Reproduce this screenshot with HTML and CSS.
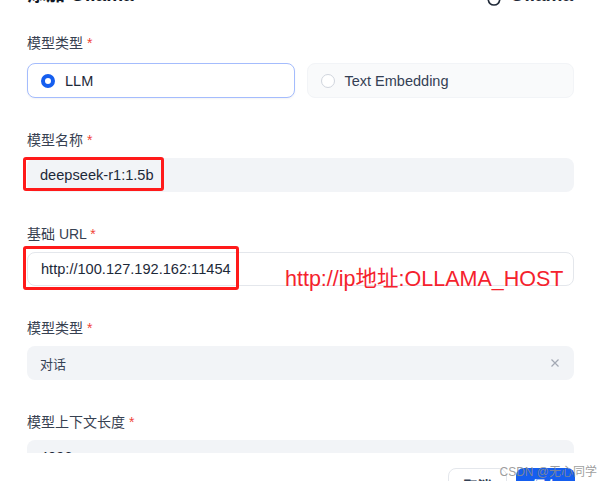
FILE: index.html
```html
<!DOCTYPE html>
<html>
<head>
  <title>添加 Ollama</title>
  <link rel="stylesheet" href="styles.css">
</head>
<body>
  <div class="modal">
    <div class="modal-body">
      <div class="modal-head">
        <div class="modal-title">添加 Ollama</div>
        <div class="provider">
          <svg class="provider-icon" width="16" height="20" viewBox="0 0 16 20">
            <path d="M3 2 L4 8 M12 2 L11 8 M2 10 Q2 18 8 18 Q14 18 14 10" fill="none" stroke="#1f2937" stroke-width="1.6"/>
          </svg>
          <span>Ollama</span>
        </div>
      </div>

      <div class="form">
        <div class="field">
          <div class="label label-cards">模型类型 <span class="req">*</span></div>
          <div class="cards">
            <div class="card card-active">
              <span class="radio radio-on"></span>
              <span>LLM</span>
            </div>
            <div class="card">
              <span class="radio"></span>
              <span>Text Embedding</span>
            </div>
          </div>
        </div>

        <div class="field">
          <div class="label">模型名称 <span class="req">*</span></div>
          <div class="input input-fill">
            deepseek-r1:1.5b
            <div class="mark mark-name"></div>
          </div>
        </div>

        <div class="field">
          <div class="label">基础 URL <span class="req">*</span></div>
          <div class="input input-line">
            http://100.127.192.162:11454
            <div class="mark mark-url"></div>
            <div class="note">http://ip地址:OLLAMA_HOST</div>
          </div>
        </div>

        <div class="field">
          <div class="label">模型类型 <span class="req">*</span></div>
          <div class="input input-fill input-select">
            <span class="select-value">对话</span>
            <svg class="clear" width="10" height="10" viewBox="0 0 10 10">
              <path d="M1.5 1.5 L8.5 8.5 M8.5 1.5 L1.5 8.5" stroke="#a3a8b3" stroke-width="1.2"/>
            </svg>
          </div>
        </div>

        <div class="field">
          <div class="label">模型上下文长度 <span class="req">*</span></div>
          <div class="input input-fill">4096</div>
        </div>
      </div>
    </div>

    <div class="modal-foot">
      <button class="btn btn-cancel">取消</button>
      <button class="btn btn-save">保存</button>
      <div class="watermark">CSDN @无心同学</div>
    </div>
  </div>
</body>
</html>
```

FILE: styles.css
```css
body {
  margin: 0;
  background-color: white;
  font-family: "Liberation Sans", "Noto Sans CJK SC", sans-serif;
  color: #1f2937;
  overflow: hidden;
}

.modal {
  width: 602px;
  height: 481px;
  background-color: white;
}

.modal-body {
  height: 453px;
  overflow: hidden;
  padding: 0 28px 0 27px;
}

.modal-head {
  display: flex;
  justify-content: space-between;
  align-items: flex-end;
  height: 24px;
  margin-top: -17px;
}

.modal-title {
  font-size: 19px;
  font-weight: bold;
  color: #111827;
  line-height: 24px;
}

.provider {
  display: flex;
  align-items: flex-end;
  gap: 8px;
  margin-right: 1px;
  font-size: 19px;
  font-weight: bold;
  color: #1f2937;
  line-height: 24px;
}

.form {
  padding-top: 26px;
}

.field {
  margin-bottom: 32px;
}

.label {
  font-size: 14px;
  line-height: 20px;
  color: #374151;
  margin-bottom: 8px;
}

.label-cards {
  margin-bottom: 10px;
}

.req {
  color: #f04438;
}

.cards {
  display: grid;
  grid-template-columns: 1fr 1fr;
  gap: 12px;
}

.card {
  display: flex;
  align-items: center;
  gap: 10px;
  height: 35px;
  box-sizing: border-box;
  padding: 0 13px;
  border: 1px solid #f2f4f7;
  border-radius: 8px;
  background-color: #f9fafb;
  font-size: 14.5px;
  color: #344054;
}

.card-active {
  background-color: white;
  border-color: #a4bcfd;
  color: #1d2939;
  box-shadow: 0 1px 2px rgba(16, 24, 40, 0.05);
}

.radio {
  width: 14px;
  height: 14px;
  box-sizing: border-box;
  border: 1px solid #d0d5dd;
  border-radius: 50%;
  background-color: white;
}

.radio-on {
  border: 4px solid #155eef;
}

.input {
  position: relative;
  display: flex;
  align-items: center;
  height: 34px;
  box-sizing: border-box;
  padding: 0 13px;
  border-radius: 8px;
  font-size: 14.6px;
  color: #1d2939;
}

.input-fill {
  background-color: #f2f4f7;
}

.input-line {
  background-color: white;
  border: 1px solid #e4e7ec;
}

.input-select {
  justify-content: space-between;
  padding-right: 14px;
}

.select-value {
  font-size: 13px;
  color: #344054;
}

.mark {
  position: absolute;
  border: 3px solid #ff1a1a;
  border-radius: 3px;
}

.mark-name {
  left: -4px;
  top: -1px;
  width: 135px;
  height: 28px;
}

.mark-url {
  left: -5px;
  top: -7px;
  width: 210px;
  height: 38px;
}

.note {
  position: absolute;
  left: 257px;
  top: 13px;
  font-size: 21.5px;
  line-height: 26px;
  color: #f5222d;
  white-space: nowrap;
}

.modal-foot {
  position: relative;
  display: flex;
  justify-content: flex-end;
  gap: 9px;
  height: 28px;
  padding: 15px 27px 0 0;
  background-color: white;
}

.btn {
  width: 59px;
  height: 34px;
  border-radius: 8px;
  font-size: 14px;
  font-family: "Liberation Sans", "Noto Sans CJK SC", sans-serif;
  font-weight: bold;
}

.btn-cancel {
  background-color: white;
  border: 1px solid #e4e7ec;
  color: #344054;
}

.btn-save {
  background-color: #155eef;
  border: none;
  color: white;
}

.watermark {
  position: absolute;
  right: 5px;
  top: 9px;
  font-size: 12px;
  color: rgba(140, 140, 140, 0.85);
}
```
